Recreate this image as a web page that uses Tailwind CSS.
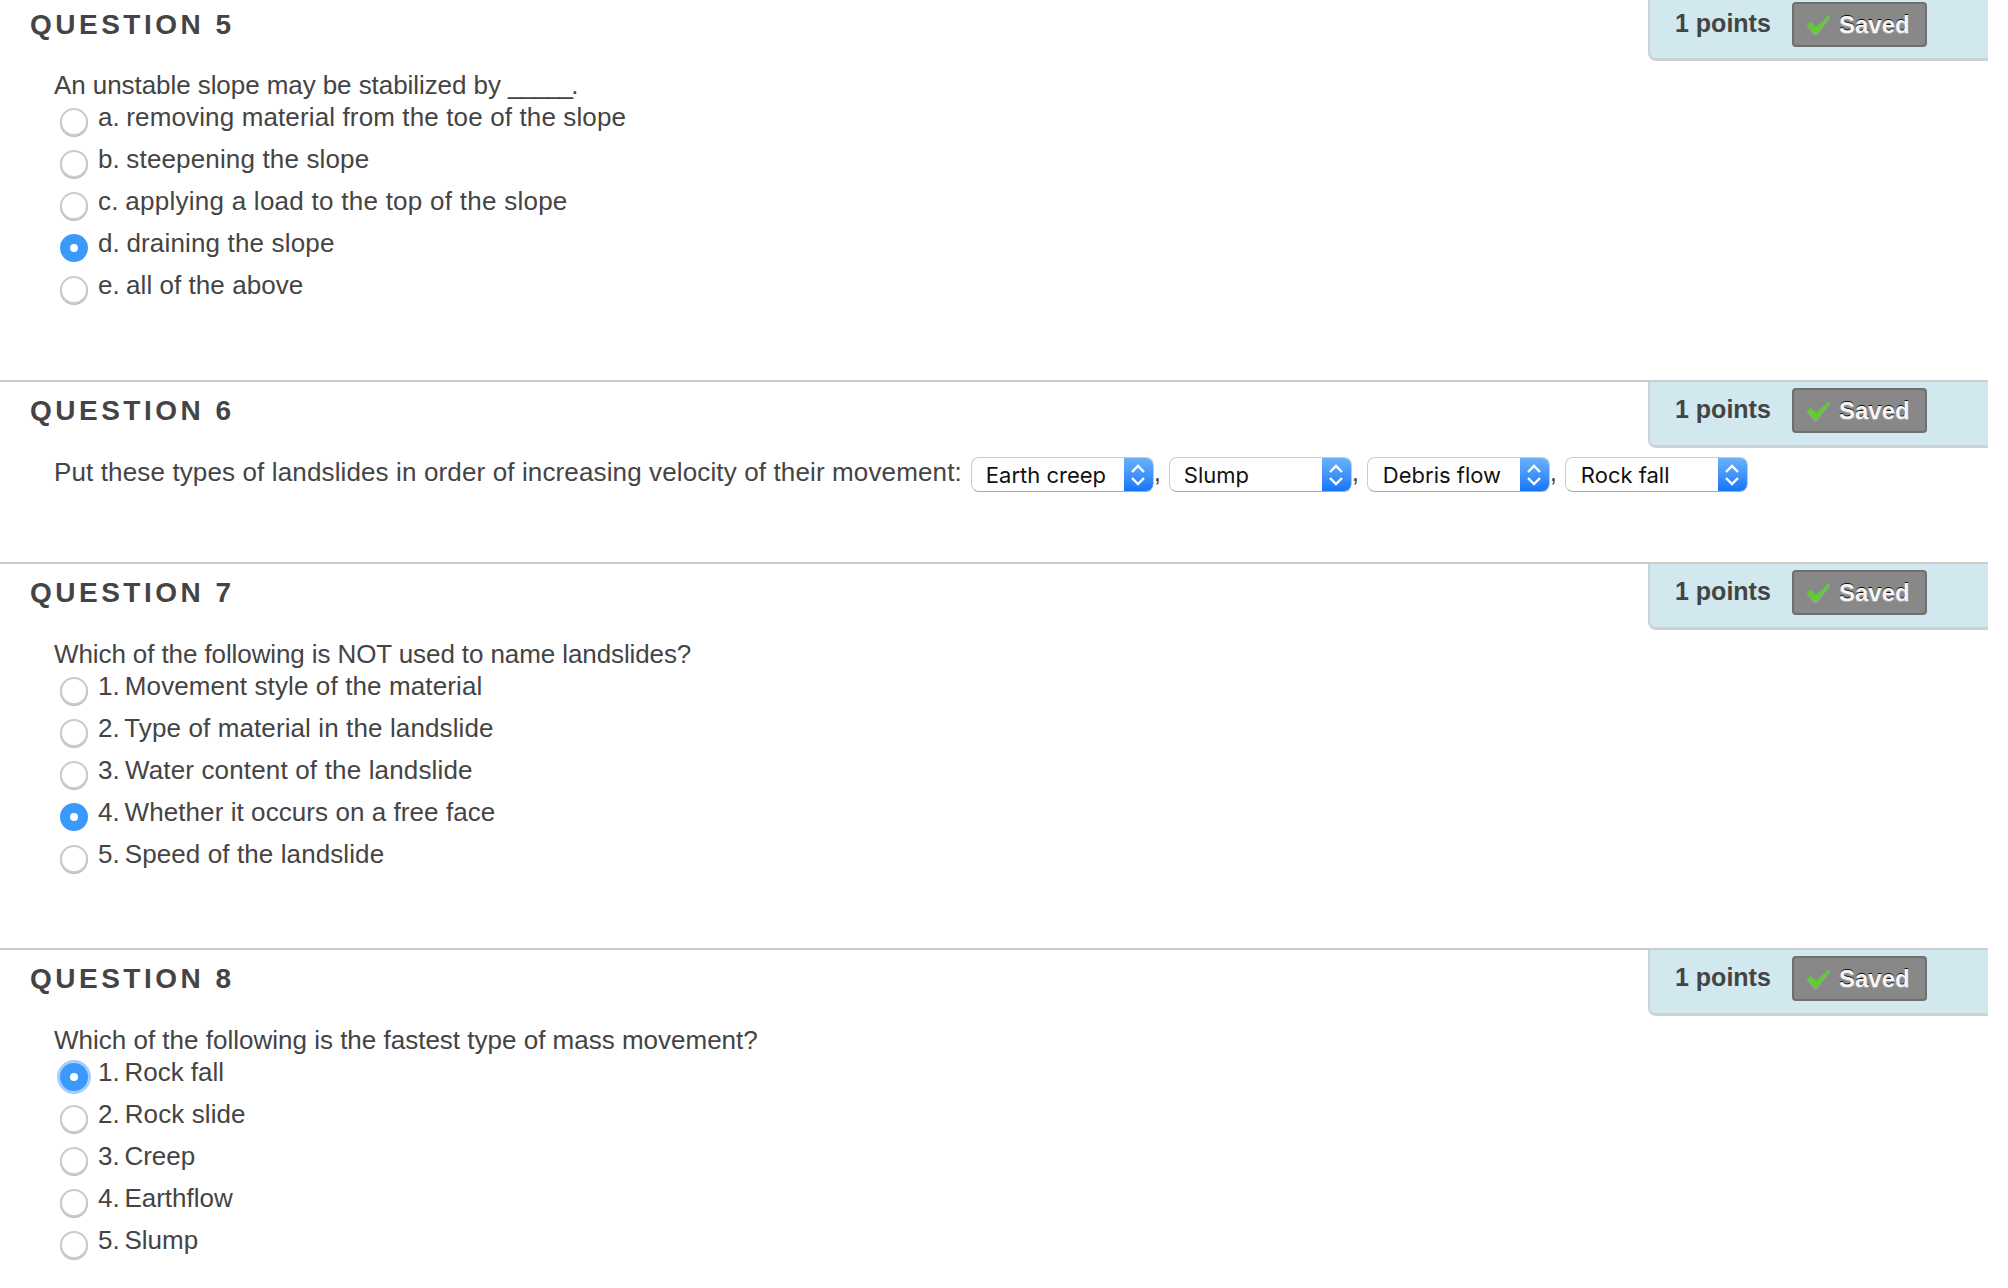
<!DOCTYPE html>
<html lang="en">
<head>
    <meta charset="UTF-8">
    <title>Quiz - Questions 5 to 8</title>
    <script src="https://cdn.jsdelivr.net/npm/@tailwindcss/browser@4"></script>
</head>
<body class="bg-white overflow-hidden font-['Liberation_Sans',Arial,sans-serif] text-[#444]">

    <!-- QUESTION 5 -->
    <section class="h-[386px] mt-[-6px] mr-[20px] pl-[30px]">
        <div class="flex justify-between h-[75px]">
            <h2 class="pt-[15px] text-[28px] leading-[32px] font-bold tracking-[3.5px]">QUESTION 5</h2>
            <div class="flex items-start w-[340px] h-[67px] pl-[25px] pt-[8px] bg-[#d1e8ee] border-l-2 border-b-[3px] border-[#ccd3d6] rounded-bl-lg">
                <span class="w-[117px] pt-[6px] text-[25px] leading-[30px] font-bold">1 points</span>
                <span class="flex items-center w-[135px] h-[45px] pl-[12px] gap-[9px] bg-[#888] border-2 border-[#6f6f6f] rounded text-[24px] font-bold text-[#f6f6f6] [text-shadow:0_-1.5px_0_#111,0_1px_1px_#aaa]">
                    <svg class="w-[24px] h-[20px]" viewBox="0 0 24 20"><path d="M1 11l4-3 5 5L22 1l2 2L11 20H8z" fill="#a0a0a0"/><path d="M1 10l4-3 5 5L22 1l2 1L11 18H8z" fill="#5ccf2f"/></svg>Saved
                </span>
            </div>
        </div>
        <p class="pl-[24px] text-[26px] leading-[32px]"><span class="tracking-[-0.07px]">An unstable slope may be stabilized by </span><span class="tracking-[-1.8px]">_____</span>.</p>
        <ul class="pl-[30px] text-[26px] leading-[32px]">
            <li class="flex h-[42px] gap-[10px]"><span class="mt-[7px] w-[28px] h-[28px] rounded-full border-2 border-[#ccc] bg-white shadow-[0_1px_0_#bbb]"></span><span class="tracking-[0.13px]"><span class="mr-[-1px]">a.</span> removing material from the toe of the slope</span></li>
            <li class="flex h-[42px] gap-[10px]"><span class="mt-[7px] w-[28px] h-[28px] rounded-full border-2 border-[#ccc] bg-white shadow-[0_1px_0_#bbb]"></span><span class="tracking-[0.15px]"><span class="mr-[-1px]">b.</span> steepening the slope</span></li>
            <li class="flex h-[42px] gap-[10px]"><span class="mt-[7px] w-[28px] h-[28px] rounded-full border-2 border-[#ccc] bg-white shadow-[0_1px_0_#bbb]"></span><span class="tracking-[0.26px]"><span class="mr-[-1px]">c.</span> applying a load to the top of the slope</span></li>
            <li class="flex h-[42px] gap-[10px]"><span class="flex items-center justify-center mt-[7px] w-[28px] h-[28px] rounded-full bg-[#3b99fc]"><span class="w-[8px] h-[8px] rounded-full bg-white"></span></span><span class="tracking-[0.16px]"><span class="mr-[-1px]">d.</span> draining the slope</span></li>
            <li class="flex h-[42px] gap-[10px]"><span class="mt-[7px] w-[28px] h-[28px] rounded-full border-2 border-[#ccc] bg-white shadow-[0_1px_0_#bbb]"></span><span class="tracking-[0.05px]"><span class="mr-[-1px]">e.</span> all of the above</span></li>
        </ul>
    </section>

    <!-- QUESTION 6 -->
    <section class="h-[182px] mr-[20px] pl-[30px] border-t-2 border-[#ccc]">
        <div class="flex justify-between h-[74px]">
            <h2 class="pt-[13px] text-[28px] leading-[32px] font-bold tracking-[3.5px]">QUESTION 6</h2>
            <div class="flex items-start w-[340px] h-[66px] pl-[25px] pt-[6px] bg-[#d1e8ee] border-l-2 border-b-[3px] border-[#ccd3d6] rounded-bl-lg">
                <span class="w-[117px] pt-[6px] text-[25px] leading-[30px] font-bold">1 points</span>
                <span class="flex items-center w-[135px] h-[45px] pl-[12px] gap-[9px] bg-[#888] border-2 border-[#6f6f6f] rounded text-[24px] font-bold text-[#f6f6f6] [text-shadow:0_-1.5px_0_#111,0_1px_1px_#aaa]">
                    <svg class="w-[24px] h-[20px]" viewBox="0 0 24 20"><path d="M1 11l4-3 5 5L22 1l2 2L11 20H8z" fill="#a0a0a0"/><path d="M1 10l4-3 5 5L22 1l2 1L11 18H8z" fill="#5ccf2f"/></svg>Saved
                </span>
            </div>
        </div>
        <div class="flex items-start pl-[24px] text-[26px] leading-[32px]">
            <span class="mr-[9px] tracking-[0.13px]">Put these types of landslides in order of increasing velocity of their movement:</span>
            <span class="flex items-center justify-between mt-[1px] w-[183px] h-[35px] pl-[14px] bg-white border border-[#ccc] border-b-[#aaa] rounded-lg overflow-hidden font-['Inter',sans-serif] text-[22px] text-[#111]">Earth creep
                <span class="flex items-center justify-center w-[29px] h-[35px] bg-gradient-to-b from-[#6cb3fa] to-[#0a74f8]"><svg class="w-[16px] h-[24px]" viewBox="0 0 16 24" fill="none" stroke="white" stroke-width="2.4"><path d="M2 9l6-6 6 6M2 15l6 6 6-6"/></svg></span>
            </span>
            <span class="w-[15px]">,</span>
            <span class="flex items-center justify-between mt-[1px] w-[183px] h-[35px] pl-[14px] bg-white border border-[#ccc] border-b-[#aaa] rounded-lg overflow-hidden font-['Inter',sans-serif] text-[22px] text-[#111]">Slump
                <span class="flex items-center justify-center w-[29px] h-[35px] bg-gradient-to-b from-[#6cb3fa] to-[#0a74f8]"><svg class="w-[16px] h-[24px]" viewBox="0 0 16 24" fill="none" stroke="white" stroke-width="2.4"><path d="M2 9l6-6 6 6M2 15l6 6 6-6"/></svg></span>
            </span>
            <span class="w-[15px]">,</span>
            <span class="flex items-center justify-between mt-[1px] w-[183px] h-[35px] pl-[15px] bg-white border border-[#ccc] border-b-[#aaa] rounded-lg overflow-hidden font-['Inter',sans-serif] text-[22px] text-[#111]">Debris flow
                <span class="flex items-center justify-center w-[29px] h-[35px] bg-gradient-to-b from-[#6cb3fa] to-[#0a74f8]"><svg class="w-[16px] h-[24px]" viewBox="0 0 16 24" fill="none" stroke="white" stroke-width="2.4"><path d="M2 9l6-6 6 6M2 15l6 6 6-6"/></svg></span>
            </span>
            <span class="w-[15px]">,</span>
            <span class="flex items-center justify-between mt-[1px] w-[183px] h-[35px] pl-[15px] bg-white border border-[#ccc] border-b-[#aaa] rounded-lg overflow-hidden font-['Inter',sans-serif] text-[22px] text-[#111]">Rock fall
                <span class="flex items-center justify-center w-[29px] h-[35px] bg-gradient-to-b from-[#6cb3fa] to-[#0a74f8]"><svg class="w-[16px] h-[24px]" viewBox="0 0 16 24" fill="none" stroke="white" stroke-width="2.4"><path d="M2 9l6-6 6 6M2 15l6 6 6-6"/></svg></span>
            </span>
        </div>
    </section>

    <!-- QUESTION 7 -->
    <section class="h-[386px] mr-[20px] pl-[30px] border-t-2 border-[#ccc]">
        <div class="flex justify-between h-[74px]">
            <h2 class="pt-[13px] text-[28px] leading-[32px] font-bold tracking-[3.5px]">QUESTION 7</h2>
            <div class="flex items-start w-[340px] h-[66px] pl-[25px] pt-[6px] bg-[#d1e8ee] border-l-2 border-b-[3px] border-[#ccd3d6] rounded-bl-lg">
                <span class="w-[117px] pt-[6px] text-[25px] leading-[30px] font-bold">1 points</span>
                <span class="flex items-center w-[135px] h-[45px] pl-[12px] gap-[9px] bg-[#888] border-2 border-[#6f6f6f] rounded text-[24px] font-bold text-[#f6f6f6] [text-shadow:0_-1.5px_0_#111,0_1px_1px_#aaa]">
                    <svg class="w-[24px] h-[20px]" viewBox="0 0 24 20"><path d="M1 11l4-3 5 5L22 1l2 2L11 20H8z" fill="#a0a0a0"/><path d="M1 10l4-3 5 5L22 1l2 1L11 18H8z" fill="#5ccf2f"/></svg>Saved
                </span>
            </div>
        </div>
        <p class="pl-[24px] text-[26px] leading-[32px] tracking-[-0.1px]">Which of the following is NOT used to name landslides?</p>
        <ul class="pl-[30px] text-[26px] leading-[32px]">
            <li class="flex h-[42px] gap-[10px]"><span class="mt-[7px] w-[28px] h-[28px] rounded-full border-2 border-[#ccc] bg-white shadow-[0_1px_0_#bbb]"></span><span class="tracking-[0.12px]"><span class="mr-[-2.5px]">1.</span> Movement style of the material</span></li>
            <li class="flex h-[42px] gap-[10px]"><span class="mt-[7px] w-[28px] h-[28px] rounded-full border-2 border-[#ccc] bg-white shadow-[0_1px_0_#bbb]"></span><span class="tracking-[0.11px]"><span class="mr-[-2.5px]">2.</span> Type of material in the landslide</span></li>
            <li class="flex h-[42px] gap-[10px]"><span class="mt-[7px] w-[28px] h-[28px] rounded-full border-2 border-[#ccc] bg-white shadow-[0_1px_0_#bbb]"></span><span class="tracking-[0.16px]"><span class="mr-[-2.5px]">3.</span> Water content of the landslide</span></li>
            <li class="flex h-[42px] gap-[10px]"><span class="flex items-center justify-center mt-[7px] w-[28px] h-[28px] rounded-full bg-[#3b99fc]"><span class="w-[8px] h-[8px] rounded-full bg-white"></span></span><span class="tracking-[0.07px]"><span class="mr-[-2.5px]">4.</span> Whether it occurs on a free face</span></li>
            <li class="flex h-[42px] gap-[10px]"><span class="mt-[7px] w-[28px] h-[28px] rounded-full border-2 border-[#ccc] bg-white shadow-[0_1px_0_#bbb]"></span><span class="tracking-[0.1px]"><span class="mr-[-2.5px]">5.</span> Speed of the landslide</span></li>
        </ul>
    </section>

    <!-- QUESTION 8 -->
    <section class="mr-[20px] pl-[30px] border-t-2 border-[#ccc]">
        <div class="flex justify-between h-[74px]">
            <h2 class="pt-[13px] text-[28px] leading-[32px] font-bold tracking-[3.5px]">QUESTION 8</h2>
            <div class="flex items-start w-[340px] h-[66px] pl-[25px] pt-[6px] bg-[#d1e8ee] border-l-2 border-b-[3px] border-[#ccd3d6] rounded-bl-lg">
                <span class="w-[117px] pt-[6px] text-[25px] leading-[30px] font-bold">1 points</span>
                <span class="flex items-center w-[135px] h-[45px] pl-[12px] gap-[9px] bg-[#888] border-2 border-[#6f6f6f] rounded text-[24px] font-bold text-[#f6f6f6] [text-shadow:0_-1.5px_0_#111,0_1px_1px_#aaa]">
                    <svg class="w-[24px] h-[20px]" viewBox="0 0 24 20"><path d="M1 11l4-3 5 5L22 1l2 2L11 20H8z" fill="#a0a0a0"/><path d="M1 10l4-3 5 5L22 1l2 1L11 18H8z" fill="#5ccf2f"/></svg>Saved
                </span>
            </div>
        </div>
        <p class="pl-[24px] text-[26px] leading-[32px]">Which of the following is the fastest type of mass movement?</p>
        <ul class="pl-[30px] text-[26px] leading-[32px]">
            <li class="flex h-[42px] gap-[10px]"><span class="flex items-center justify-center mt-[7px] w-[28px] h-[28px] rounded-full bg-[#3b99fc] ring-[3px] ring-[#a3cffc]"><span class="w-[8px] h-[8px] rounded-full bg-white"></span></span><span><span class="mr-[-2.5px]">1.</span> Rock fall</span></li>
            <li class="flex h-[42px] gap-[10px]"><span class="mt-[7px] w-[28px] h-[28px] rounded-full border-2 border-[#ccc] bg-white shadow-[0_1px_0_#bbb]"></span><span class="tracking-[0.1px]"><span class="mr-[-2.5px]">2.</span> Rock slide</span></li>
            <li class="flex h-[42px] gap-[10px]"><span class="mt-[7px] w-[28px] h-[28px] rounded-full border-2 border-[#ccc] bg-white shadow-[0_1px_0_#bbb]"></span><span><span class="mr-[-2.5px]">3.</span> Creep</span></li>
            <li class="flex h-[42px] gap-[10px]"><span class="mt-[7px] w-[28px] h-[28px] rounded-full border-2 border-[#ccc] bg-white shadow-[0_1px_0_#bbb]"></span><span><span class="mr-[-2.5px]">4.</span> Earthflow</span></li>
            <li class="flex h-[42px] gap-[10px]"><span class="mt-[7px] w-[28px] h-[28px] rounded-full border-2 border-[#ccc] bg-white shadow-[0_1px_0_#bbb]"></span><span><span class="mr-[-2.5px]">5.</span> Slump</span></li>
        </ul>
    </section>
</body>
</html>
